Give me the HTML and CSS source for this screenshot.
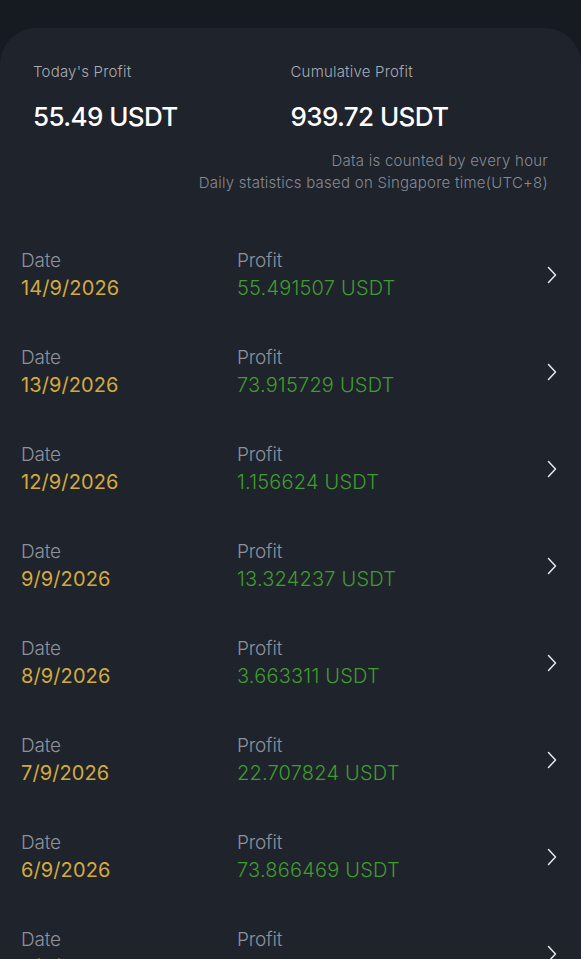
FILE: index.html
```html
<!DOCTYPE html>
<html>
<head>
<meta charset="utf-8">
<link rel="stylesheet" href="styles.css">
</head>
<body>
<div class="card">
  <div class="summary">
    <div class="stat">
      <div class="stat-label">Today's Profit</div>
      <div class="stat-value">55.49 USDT</div>
    </div>
    <div class="stat">
      <div class="stat-label">Cumulative Profit</div>
      <div class="stat-value">939.72 USDT</div>
    </div>
  </div>
  <div class="notes">
    <div>Data is counted by every hour</div>
    <div>Daily statistics based on Singapore time(UTC+8)</div>
  </div>
  <div class="list">
    <div class="row">
      <div class="col col-date"><div class="lbl">Date</div><div class="date">14/9/2026</div></div>
      <div class="col col-profit"><div class="lbl">Profit</div><div class="profit">55.491507 USDT</div></div>
      <svg class="chev" viewBox="0 0 10 18"><path d="M1.5 1.5 L8.5 9 L1.5 16.5" /></svg>
    </div>
    <div class="row">
      <div class="col col-date"><div class="lbl">Date</div><div class="date">13/9/2026</div></div>
      <div class="col col-profit"><div class="lbl">Profit</div><div class="profit">73.915729 USDT</div></div>
      <svg class="chev" viewBox="0 0 10 18"><path d="M1.5 1.5 L8.5 9 L1.5 16.5" /></svg>
    </div>
    <div class="row">
      <div class="col col-date"><div class="lbl">Date</div><div class="date">12/9/2026</div></div>
      <div class="col col-profit"><div class="lbl">Profit</div><div class="profit">1.156624 USDT</div></div>
      <svg class="chev" viewBox="0 0 10 18"><path d="M1.5 1.5 L8.5 9 L1.5 16.5" /></svg>
    </div>
    <div class="row">
      <div class="col col-date"><div class="lbl">Date</div><div class="date">9/9/2026</div></div>
      <div class="col col-profit"><div class="lbl">Profit</div><div class="profit">13.324237 USDT</div></div>
      <svg class="chev" viewBox="0 0 10 18"><path d="M1.5 1.5 L8.5 9 L1.5 16.5" /></svg>
    </div>
    <div class="row">
      <div class="col col-date"><div class="lbl">Date</div><div class="date">8/9/2026</div></div>
      <div class="col col-profit"><div class="lbl">Profit</div><div class="profit">3.663311 USDT</div></div>
      <svg class="chev" viewBox="0 0 10 18"><path d="M1.5 1.5 L8.5 9 L1.5 16.5" /></svg>
    </div>
    <div class="row">
      <div class="col col-date"><div class="lbl">Date</div><div class="date">7/9/2026</div></div>
      <div class="col col-profit"><div class="lbl">Profit</div><div class="profit">22.707824 USDT</div></div>
      <svg class="chev" viewBox="0 0 10 18"><path d="M1.5 1.5 L8.5 9 L1.5 16.5" /></svg>
    </div>
    <div class="row">
      <div class="col col-date"><div class="lbl">Date</div><div class="date">6/9/2026</div></div>
      <div class="col col-profit"><div class="lbl">Profit</div><div class="profit">73.866469 USDT</div></div>
      <svg class="chev" viewBox="0 0 10 18"><path d="M1.5 1.5 L8.5 9 L1.5 16.5" /></svg>
    </div>
    <div class="row">
      <div class="col col-date"><div class="lbl">Date</div><div class="date">5/9/2026</div></div>
      <div class="col col-profit"><div class="lbl">Profit</div><div class="profit">45.836145 USDT</div></div>
      <svg class="chev" viewBox="0 0 10 18"><path d="M1.5 1.5 L8.5 9 L1.5 16.5" /></svg>
    </div>
  </div>
</div>
</body>
</html>
```

FILE: styles.css
```css
html, body {
  margin: 0;
  padding: 0;
  background: #161b22;
  height: 100%;
  overflow: hidden;
}
body {
  padding-top: 28px;
  font-family: Inter, "Noto Sans", sans-serif;
}
.card {
  background: #1f232c;
  border-radius: 36px 36px 0 0;
  min-height: 1200px;
  padding-top: 35px;
}
.summary {
  display: flex;
  padding: 0 33px;
}
.stat {
  width: 258px;
}
.stat-label {
  font-size: 15px;
  font-weight: 300;
  color: #a7abb2;
  line-height: 18px;
  letter-spacing: 0.2px;
}
.stat-value {
  margin-top: 20px;
  font-size: 26px;
  font-weight: 500;
  color: #ffffff;
  line-height: 32px;
  letter-spacing: -0.6px;
}
.notes {
  margin-top: 17px;
  padding-right: 33px;
  text-align: right;
  font-size: 15px;
  font-weight: 300;
  line-height: 22px;
  color: #858a93;
  letter-spacing: 0.25px;
}
.list {
  margin-top: 32px;
}
.row {
  display: flex;
  align-items: center;
  height: 97px;
  padding-left: 21px;
  padding-right: 24px;
}
.col-date {
  width: 216px;
}
.col-profit {
  flex: 1;
}
.lbl {
  font-size: 19px;
  font-weight: 300;
  line-height: 27px;
  color: #8d929b;
  letter-spacing: -0.2px;
}
.date {
  font-size: 20px;
  font-weight: 400;
  line-height: 28px;
  color: #d3ab3c;
  letter-spacing: 0.1px;
}
.profit {
  font-size: 20px;
  font-weight: 300;
  line-height: 28px;
  color: #3f9d2e;
  letter-spacing: 0.2px;
}
.chev {
  width: 10px;
  height: 18px;
  fill: none;
  stroke: #e6e8eb;
  stroke-width: 1.5;
  stroke-linecap: round;
  stroke-linejoin: round;
}
```
